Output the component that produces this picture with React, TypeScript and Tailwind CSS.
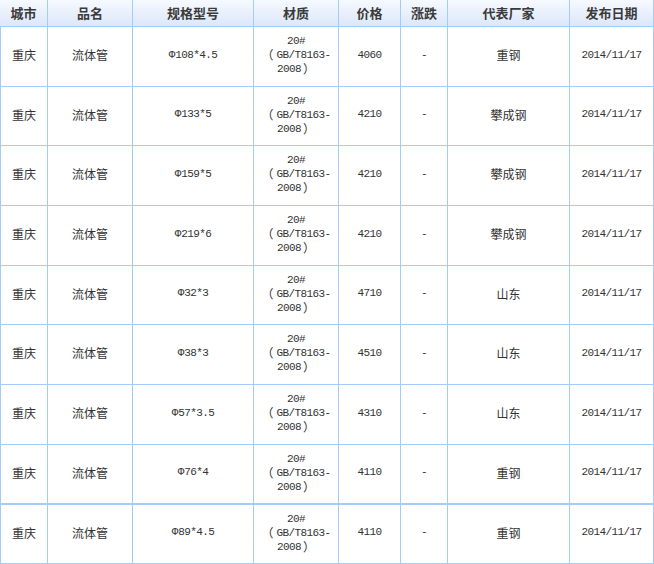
import type { ReactNode } from "react";

type Row = {
	spec: string;
	price: string;
	maker: string;
	h: string;
};

const rows: Row[] = [
	{ spec: "108*4.5", price: "4060", maker: "重钢", h: "h-[60px]" },
	{ spec: "133*5", price: "4210", maker: "攀成钢", h: "h-[59px]" },
	{ spec: "159*5", price: "4210", maker: "攀成钢", h: "h-[60px]" },
	{ spec: "219*6", price: "4210", maker: "攀成钢", h: "h-[60px]" },
	{ spec: "32*3", price: "4710", maker: "山东", h: "h-[59px]" },
	{ spec: "38*3", price: "4510", maker: "山东", h: "h-[60px]" },
	{ spec: "57*3.5", price: "4310", maker: "山东", h: "h-[60px]" },
	{ spec: "76*4", price: "4110", maker: "重钢", h: "h-[59px]" },
];

const last: Row = { spec: "89*4.5", price: "4110", maker: "重钢", h: "h-[60px]" };

const widths = [
	"w-[47px]",
	"w-[85px]",
	"w-[121px]",
	"w-[85px]",
	"w-[62px]",
	"w-[47px]",
	"w-[122px]",
	"w-[84px]",
];

const headers = ["城市", "品名", "规格型号", "材质", "价格", "涨跌", "代表厂家", "发布日期"];

const cjk = "font-['Noto_Sans_CJK_SC',sans-serif]";
const mono = "font-['Liberation_Mono','Noto_Sans_CJK_SC',monospace] tracking-[-0.6px] text-[11px]";
const paren = `${cjk} inline-block h-[14px] align-top text-[12px] leading-[14px] tracking-normal`;

function Cell({ i, children, className }: { i: number; children: ReactNode; className?: string }) {
	return (
		<div
			className={`${widths[i]} flex shrink-0 items-center justify-center border-r border-[#a3cdf6] pb-[3px] text-center text-[#333] ${className ?? ""}`}
		>
			{children}
		</div>
	);
}

function DataRow({ row, extra }: { row: Row; extra?: string }) {
	return (
		<div className={`flex ${row.h} border-b border-l border-[#a3cdf6] ${extra ?? ""}`}>
			<Cell i={0} className={`${cjk} text-[12px]`}>重庆</Cell>
			<Cell i={1} className={`${cjk} text-[12px]`}>流体管</Cell>
			<Cell i={2} className={mono}>
				<span className="tracking-normal">Φ</span>
				{row.spec}
			</Cell>
			<Cell i={3} className={`${mono} leading-[14px]`}>
				<span>
					20#
					<br />
					<span className={`${paren} mr-[3px]`}>（</span>
					GB/T8163-
					<br />
					2008
					<span className={`${paren} ml-[2px]`}>）</span>
				</span>
			</Cell>
			<Cell i={4} className={mono}>{row.price}</Cell>
			<Cell i={5} className={mono}>-</Cell>
			<Cell i={6} className={`${cjk} text-[12px]`}>{row.maker}</Cell>
			<Cell i={7} className={mono}>2014/11/17</Cell>
		</div>
	);
}

export default function App() {
	return (
		<div className="w-[654px] bg-white">
			<div className="flex h-[27px] border-b border-[#a3cdf6] bg-gradient-to-b from-[#f6f9ff] to-[#dce7f9]">
				{headers.map((h, i) => (
					<div
						key={h}
						className={`${i === 0 ? "w-[48px]" : widths[i]} flex shrink-0 items-center justify-center border-r border-[#a3cdf6] ${cjk} text-[13px] font-bold text-[#3a3a3a]`}
					>
						{h}
					</div>
				))}
			</div>
			{rows.map((r, i) => (
				<DataRow key={i} row={r} />
			))}
			<DataRow row={last} extra="border-t" />
		</div>
	);
}
